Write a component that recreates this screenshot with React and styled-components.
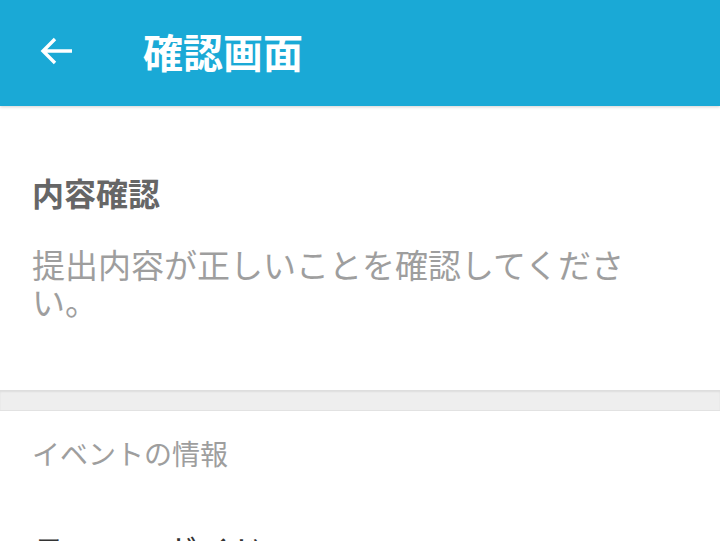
import React from "react";
import styled, { createGlobalStyle } from "styled-components";

const GlobalStyle = createGlobalStyle`
  html, body {
    margin: 0;
    padding: 0;
    overflow: hidden;
    background: #ffffff;
  }
  body {
    font-family: "Noto Sans CJK JP", "Noto Sans", sans-serif;
  }
`;

const Screen = styled.div`
  display: flex;
  flex-direction: column;
  width: 720px;
  height: 541px;
  overflow: hidden;
`;

const AppBar = styled.header`
  display: flex;
  align-items: center;
  height: 106px;
  flex-shrink: 0;
  padding: 0 0 4px 32px;
  box-sizing: border-box;
  background: #1aa9d6;
  box-shadow: 0 1px 3px rgba(0, 0, 0, 0.18);
  position: relative;
  z-index: 1;
`;

const BackButton = styled.button`
  display: flex;
  align-items: center;
  justify-content: center;
  width: 48px;
  height: 48px;
  padding: 0;
  border: none;
  background: transparent;
  cursor: pointer;
`;

const Title = styled.h1`
  margin: 0 0 0 63px;
  font-size: 40px;
  line-height: 1.15;
  font-weight: 700;
  color: #ffffff;
`;

const Card = styled.section`
  background: #ffffff;
  padding: ${({ pad }) => pad};
`;

const Heading = styled.h2`
  margin: 0;
  font-size: 32px;
  line-height: 1.15;
  font-weight: 700;
  color: #666666;
`;

const Description = styled.p`
  margin: 35px 0 0;
  width: 610px;
  font-size: 33px;
  line-height: 1.12;
  color: #9e9e9e;
`;

const Divider = styled.div`
  height: 20px;
  flex-shrink: 0;
  background: #eeeeee;
  box-shadow: inset 0 2px 2px rgba(0, 0, 0, 0.07);
  border-bottom: 1px solid #e2e2e2;
`;

const SectionLabel = styled.div`
  font-size: 28px;
  line-height: 1.15;
  color: #9e9e9e;
`;

const FieldLabel = styled.div`
  margin-top: 63px;
  font-size: 33px;
  line-height: 1.15;
  color: #333333;
`;

const ArrowBack = () => (
  <svg width="48" height="48" viewBox="0 0 48 48" fill="none">
    <path
      d="M40 24H11M23 12L11 24L23 36"
      stroke="#ffffff"
      strokeWidth="3.4"
      strokeLinejoin="miter"
    />
  </svg>
);

export default function App() {
  return (
    <>
      <GlobalStyle />
      <Screen>
        <AppBar>
          <BackButton aria-label="戻る">
            <ArrowBack />
          </BackButton>
          <Title>確認画面</Title>
        </AppBar>

        <Card pad="68px 32px 70px">
          <Heading>内容確認</Heading>
          <Description>提出内容が正しいことを確認してください。</Description>
        </Card>

        <Divider />

        <Card pad="26px 32px 0">
          <SectionLabel>イベントの情報</SectionLabel>
          <FieldLabel>テーマ・ガイド</FieldLabel>
        </Card>
      </Screen>
    </>
  );
}
